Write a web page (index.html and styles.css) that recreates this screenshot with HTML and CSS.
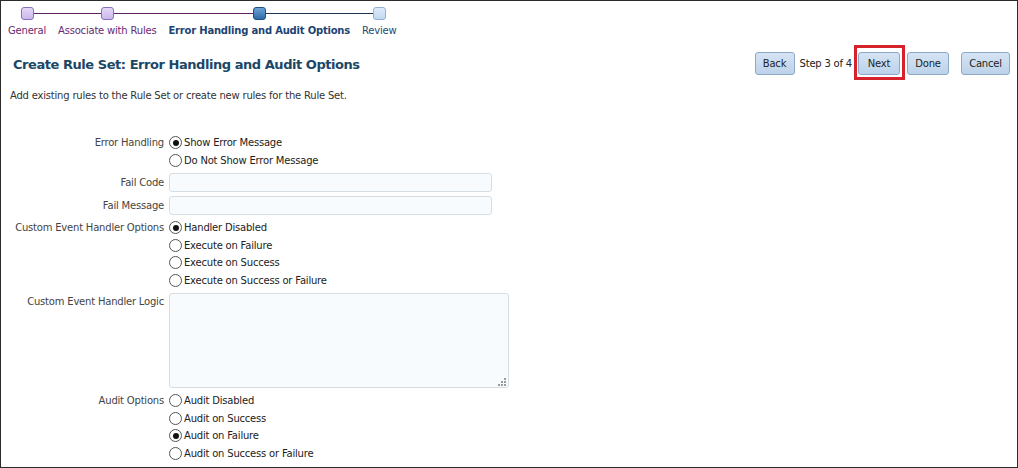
FILE: index.html
```html
<!DOCTYPE html>
<html>
<head>
<meta charset="utf-8">
<link rel="stylesheet" href="styles.css">
</head>
<body>
<div class="page">
  <div class="train">
    <div class="step visited first">
      <span class="node"></span>
      <span class="step-label">General</span>
    </div>
    <div class="step visited">
      <span class="node"></span>
      <span class="step-label">Associate with Rules</span>
    </div>
    <div class="step current">
      <span class="node"></span>
      <span class="step-label">Error Handling and Audit Options</span>
    </div>
    <div class="step todo last">
      <span class="node"></span>
      <span class="step-label">Review</span>
    </div>
  </div>

  <div class="header">
    <h1 class="title">Create Rule Set: Error Handling and Audit Options</h1>
    <div class="actions">
      <button class="btn btn-back">Back</button>
      <span class="step-info">Step 3 of 4</span>
      <button class="btn btn-next highlighted">Next</button>
      <button class="btn btn-done">Done</button>
      <button class="btn btn-cancel">Cancel</button>
    </div>
  </div>

  <p class="desc">Add existing rules to the Rule Set or create new rules for the Rule Set.</p>

  <div class="form">
    <div class="label">Error Handling</div>
    <div class="radios">
      <label class="opt"><input type="radio" name="eh" checked><span>Show Error Message</span></label>
      <label class="opt"><input type="radio" name="eh"><span>Do Not Show Error Message</span></label>
    </div>

    <div class="label label-input">Fail Code</div>
    <div><input type="text" class="field"></div>

    <div class="label label-input">Fail Message</div>
    <div><input type="text" class="field"></div>

    <div class="label">Custom Event Handler Options</div>
    <div class="radios">
      <label class="opt"><input type="radio" name="ce" checked><span>Handler Disabled</span></label>
      <label class="opt"><input type="radio" name="ce"><span>Execute on Failure</span></label>
      <label class="opt"><input type="radio" name="ce"><span>Execute on Success</span></label>
      <label class="opt"><input type="radio" name="ce"><span>Execute on Success or Failure</span></label>
    </div>

    <div class="label label-area">Custom Event Handler Logic</div>
    <div class="area-wrap">
      <textarea class="area"></textarea>
      <svg class="grip" width="9" height="9" viewBox="0 0 9 9">
        <rect x="7" y="1" width="2" height="2" fill="#9a9a9a"/>
        <rect x="4" y="4" width="2" height="2" fill="#9a9a9a"/>
        <rect x="7" y="4" width="2" height="2" fill="#9a9a9a"/>
        <rect x="1" y="7" width="2" height="2" fill="#9a9a9a"/>
        <rect x="4" y="7" width="2" height="2" fill="#9a9a9a"/>
        <rect x="7" y="7" width="2" height="2" fill="#9a9a9a"/>
      </svg>
    </div>

    <div class="label">Audit Options</div>
    <div class="radios">
      <label class="opt"><input type="radio" name="ao"><span>Audit Disabled</span></label>
      <label class="opt"><input type="radio" name="ao"><span>Audit on Success</span></label>
      <label class="opt"><input type="radio" name="ao" checked><span>Audit on Failure</span></label>
      <label class="opt"><input type="radio" name="ao"><span>Audit on Success or Failure</span></label>
    </div>
  </div>
</div>
</body>
</html>
```

FILE: styles.css
```css
* { box-sizing: border-box; }

html, body {
  margin: 0;
  padding: 0;
  background: #ffffff;
}

body {
  font-family: "DejaVu Sans", Verdana, sans-serif;
  font-size: 10px;
  letter-spacing: -0.2px;
  color: #333333;
}

.page {
  width: 1018px;
  height: 468px;
  border: 1px solid #2b2b2b;
  overflow: hidden;
}

/* ---------- train ---------- */
.train {
  display: flex;
  padding: 6px 0 0 1px;
}

.step {
  position: relative;
  display: flex;
  flex-direction: column;
  align-items: center;
  padding: 0 6px;
}

.step::before,
.step::after {
  content: "";
  position: absolute;
  top: 6px;
  height: 1px;
  background: #5d2262;
}
.step::before { left: 0; right: 50%; }
.step::after { left: 50%; right: 0; }
.step.first::before { display: none; }
.step.last::after { display: none; }
.step.current::after { background: #1b3753; }
.step.todo::before { background: #1b3753; }

.node {
  position: relative;
  z-index: 1;
  width: 13px;
  height: 13px;
  border-radius: 3px;
}
.visited .node {
  background: linear-gradient(#e4d8f6, #cbb8ec);
  border: 1px solid #8a70bd;
}
.current .node {
  background: linear-gradient(#6aa3d6, #2f6ba6);
  border: 1px solid #1f4d7c;
}
.todo .node {
  background: linear-gradient(#dcebf9, #c2d9f1);
  border: 1px solid #8fb2d6;
}

.step-label {
  margin-top: 4px;
  line-height: 14px;
  white-space: nowrap;
}
.visited .step-label { color: #6a2a72; }
.current .step-label { color: #1c4472; font-weight: bold; }
.todo .step-label { color: #234a74; }

/* ---------- header ---------- */
.header {
  display: flex;
  align-items: center;
  height: 35px;
  margin-top: 8px;
  padding: 0 7px 0 12px;
}

.title {
  flex: 1;
  margin: 0;
  padding-top: 1px;
  font-family: "DejaVu Sans", Verdana, sans-serif;
  font-size: 13px;
  font-weight: bold;
  letter-spacing: -0.45px;
  color: #1b4766;
}

.actions {
  display: flex;
  align-items: center;
}

.btn {
  height: 23px;
  padding: 0 6px;
  font-family: inherit;
  font-size: 10px;
  letter-spacing: -0.2px;
  color: #1e1e1e;
  background: linear-gradient(#d5e4f4, #bcd2ea);
  border: 1px solid #8ea9c8;
  border-radius: 3px;
}

.btn-back { width: 40px; }
.btn-next { width: 42px; margin-left: 6px; }
.btn-done { width: 42px; margin-left: 7px; }
.btn-cancel { width: 49px; margin-left: 12px; }

.step-info {
  margin-left: 5px;
  color: #222;
}

.highlighted { position: relative; }
.highlighted::after {
  content: "";
  position: absolute;
  top: -8px;
  left: -5px;
  right: -6px;
  bottom: -6px;
  border: 3px solid #d6222b;
}

/* ---------- description ---------- */
.desc {
  margin: 8px 0 0 9px;
  line-height: 14px;
  color: #333;
}

/* ---------- form ---------- */
.form {
  display: grid;
  grid-template-columns: 163px 1fr;
  column-gap: 5px;
  row-gap: 4px;
  margin-top: 31px;
}

.label {
  text-align: right;
  line-height: 17.5px;
  color: #444;
  white-space: nowrap;
}
.label-input { line-height: 19px; }
.label-area { line-height: 14px; padding-top: 2px; }

.radios {
  display: flex;
  flex-direction: column;
}

.opt {
  display: flex;
  align-items: center;
  height: 17.5px;
  color: #222;
}

.opt input {
  -webkit-appearance: none;
  appearance: none;
  margin: 0 2px 0 0;
  width: 13px;
  height: 13px;
  border: 1px solid #555;
  border-radius: 50%;
  background: #fff;
  position: relative;
  flex: none;
}
.opt input:checked::after {
  content: "";
  position: absolute;
  left: 2.5px;
  top: 2.5px;
  width: 6px;
  height: 6px;
  border-radius: 50%;
  background: #111;
}

.field {
  display: block;
  width: 323px;
  height: 19px;
  margin: 0;
  background: #f7fbfe;
  border: 1px solid #d5dde5;
  border-radius: 3px;
  outline: none;
}

.area-wrap {
  position: relative;
  width: 340px;
  height: 95px;
}

.area {
  display: block;
  width: 340px;
  height: 95px;
  margin: 0;
  resize: none;
  background: #f7fbfe;
  border: 1px solid #d5dde5;
  border-radius: 3px;
  outline: none;
}

.grip {
  position: absolute;
  right: 3px;
  bottom: 2px;
}
```
